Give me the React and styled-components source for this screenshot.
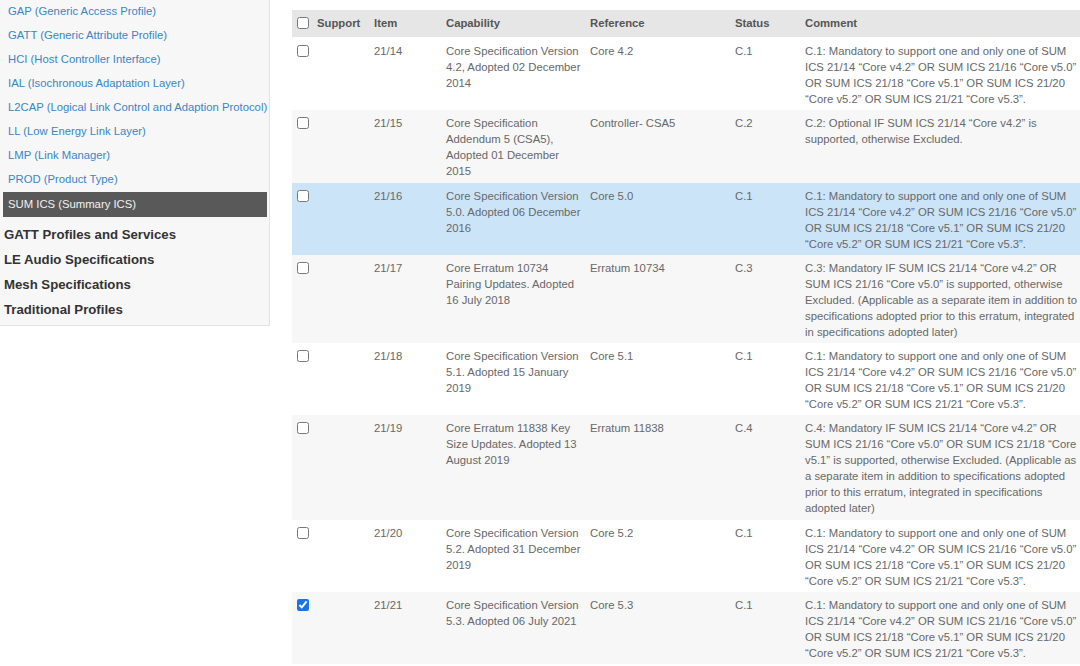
import React from "react";
import styled, { createGlobalStyle } from "styled-components";

const Global = createGlobalStyle`
  html, body { margin: 0; padding: 0; background: #fff; overflow: hidden; }
  body { font-family: "Liberation Sans", Arial, sans-serif; }
`;

const Page = styled.div`
  display: flex;
  align-items: flex-start;
  gap: 22px;
  width: 1080px;
  height: 666px;
  overflow: hidden;
`;

const Sidebar = styled.nav`
  flex: 0 0 270px;
  width: 270px;
  background: #f7f7f7;
  border-right: 1px solid #e2e2e2;
  border-bottom: 1px solid #e2e2e2;
  padding: 0 2px 3px 3px;
  box-sizing: border-box;
  margin-top: -1px;
`;

const NavLink = styled.a`
  display: block;
  height: 24px;
  line-height: 24px;
  padding-left: 5px;
  font-size: 11.3px;
  white-space: nowrap;
  text-decoration: none;
  color: ${(p) => (p.$active ? "#f2f2f2" : "#3a86c6")};
  background: ${(p) => (p.$active ? "#595959" : "transparent")};
  ${(p) => p.$active && "height: 25px; line-height: 25px; margin-top: 1px;"}
`;

const Heading = styled.div`
  height: 25px;
  line-height: 25px;
  padding-left: 1px;
  font-size: 13.2px;
  font-weight: bold;
  color: #333;
  &:first-of-type { margin-top: 5px; }
`;

const Table = styled.table`
  flex: 0 0 800px;
  width: 800px;
  margin-top: 10px;
  border-collapse: collapse;
  table-layout: fixed;
  font-size: 11.3px;
  line-height: 16px;
  color: #686868;
`;

const Th = styled.th`
  text-align: left;
  font-weight: bold;
  color: #555;
  background: #e6e6e6;
  padding: 5px 8px 6px;
  vertical-align: top;
  white-space: nowrap;
`;

const Row = styled.tr`
  background: ${(p) => (p.$hover ? "#cce4f8" : p.$alt ? "#f7f7f7" : "#fff")};
  &:first-child > td { padding-top: 6px; }
`;

const Td = styled.td`
  vertical-align: top;
  padding: 5px ${(p) => (p.$tight ? "0" : "8px")} 3.3px 8px;
`;

const CheckCell = styled.td`
  vertical-align: top;
  padding: 5px 0 3.3px 5px;
`;

const Box = styled.input.attrs({ type: "checkbox" })`
  width: 12px;
  height: 12px;
  margin: 2px 0 0 0;
  vertical-align: top;
  accent-color: #1a73e8;
`;

const HeadCheck = styled.span`
  display: flex;
  align-items: flex-start;
  height: 16px;
  gap: 8px;
  margin-left: -3px;
`;

const C1 =
  "C.1: Mandatory to support one and only one of SUM ICS 21/14 \u201cCore v4.2\u201d OR SUM ICS 21/16 \u201cCore v5.0\u201d OR SUM ICS 21/18 \u201cCore v5.1\u201d OR SUM ICS 21/20 \u201cCore v5.2\u201d OR SUM ICS 21/21 \u201cCore v5.3\u201d.";

const rows = [
  { item: "21/14", cap: "Core Specification Version 4.2, Adopted 02 December 2014", ref: "Core 4.2", status: "C.1", comment: C1 },
  { item: "21/15", cap: "Core Specification Addendum 5 (CSA5), Adopted 01 December 2015", ref: "Controller- CSA5", status: "C.2", comment: "C.2: Optional IF SUM ICS 21/14 \u201cCore v4.2\u201d is supported, otherwise Excluded." },
  { item: "21/16", cap: "Core Specification Version 5.0. Adopted 06 December 2016", ref: "Core 5.0", status: "C.1", comment: C1, hover: true },
  { item: "21/17", cap: "Core Erratum 10734 Pairing Updates. Adopted 16 July 2018", ref: "Erratum 10734", status: "C.3", comment: "C.3: Mandatory IF SUM ICS 21/14 \u201cCore v4.2\u201d OR SUM ICS 21/16 \u201cCore v5.0\u201d is supported, otherwise Excluded. (Applicable as a separate item in addition to specifications adopted prior to this erratum, integrated in specifications adopted later)" },
  { item: "21/18", cap: "Core Specification Version 5.1. Adopted 15 January 2019", ref: "Core 5.1", status: "C.1", comment: C1 },
  { item: "21/19", cap: "Core Erratum 11838 Key Size Updates. Adopted 13 August 2019", ref: "Erratum 11838", status: "C.4", comment: "C.4: Mandatory IF SUM ICS 21/14 \u201cCore v4.2\u201d OR SUM ICS 21/16 \u201cCore v5.0\u201d OR SUM ICS 21/18 \u201cCore v5.1\u201d is supported, otherwise Excluded. (Applicable as a separate item in addition to specifications adopted prior to this erratum, integrated in specifications adopted later)" },
  { item: "21/20", cap: "Core Specification Version 5.2. Adopted 31 December 2019", ref: "Core 5.2", status: "C.1", comment: C1 },
  { item: "21/21", cap: "Core Specification Version 5.3. Adopted 06 July 2021", ref: "Core 5.3", status: "C.1", comment: C1, checked: true },
];

const links = [
  "GAP (Generic Access Profile)",
  "GATT (Generic Attribute Profile)",
  "HCI (Host Controller Interface)",
  "IAL (Isochronous Adaptation Layer)",
  "L2CAP (Logical Link Control and Adaption Protocol)",
  "LL (Low Energy Link Layer)",
  "LMP (Link Manager)",
  "PROD (Product Type)",
];

const headings = ["GATT Profiles and Services", "LE Audio Specifications", "Mesh Specifications", "Traditional Profiles"];

export default function App() {
  return (
    <>
      <Global />
      <Page>
        <Sidebar>
          {links.map((l) => (
            <NavLink key={l} href="#">{l}</NavLink>
          ))}
          <NavLink $active href="#">SUM ICS (Summary ICS)</NavLink>
          {headings.map((h) => (
            <Heading key={h}>{h}</Heading>
          ))}
        </Sidebar>
        <Table>
          <colgroup>
            <col style={{ width: 74 }} />
            <col style={{ width: 72 }} />
            <col style={{ width: 144 }} />
            <col style={{ width: 145 }} />
            <col style={{ width: 70 }} />
            <col style={{ width: 295 }} />
          </colgroup>
          <thead>
            <tr>
              <Th>
                <HeadCheck>
                  <Box readOnly />
                  Support
                </HeadCheck>
              </Th>
              <Th>Item</Th>
              <Th>Capability</Th>
              <Th>Reference</Th>
              <Th>Status</Th>
              <Th>Comment</Th>
            </tr>
          </thead>
          <tbody>
            {rows.map((r, i) => (
              <Row key={r.item} $alt={i % 2 === 1} $hover={r.hover}>
                <CheckCell>
                  <Box readOnly defaultChecked={r.checked} />
                </CheckCell>
                <Td>{r.item}</Td>
                <Td $tight>{r.cap}</Td>
                <Td>{r.ref}</Td>
                <Td>{r.status}</Td>
                <Td>{r.comment}</Td>
              </Row>
            ))}
          </tbody>
        </Table>
      </Page>
    </>
  );
}
